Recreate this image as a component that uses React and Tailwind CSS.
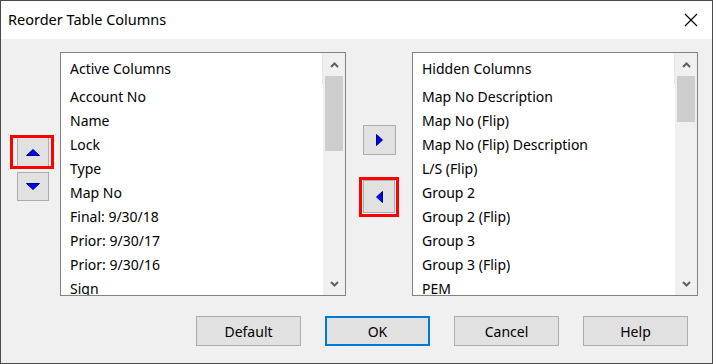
const font = { fontFamily: '"Noto Sans", "Open Sans", sans-serif' };

const activeColumns = [
  'Account No',
  'Name',
  'Lock',
  'Type',
  'Map No',
  'Final: 9/30/18',
  'Prior: 9/30/17',
  'Prior: 9/30/16',
  'Sign',
];

const hiddenColumns = [
  'Map No Description',
  'Map No (Flip)',
  'Map No (Flip) Description',
  'L/S (Flip)',
  'Group 2',
  'Group 2 (Flip)',
  'Group 3',
  'Group 3 (Flip)',
  'PEM',
];

const Chevron = ({ up }) => (
  <svg width="9" height="6" viewBox="0 0 9 6">
    <polyline
      points={up ? '1,5 4.5,1.5 8,5' : '1,1 4.5,4.5 8,1'}
      fill="none"
      stroke="#606060"
      strokeWidth="2"
    />
  </svg>
);

const Triangle = ({ dir }) => {
  const pts = {
    up: '0.5,6.5 7,0.5 13.5,6.5',
    down: '0.5,0.5 7,6.5 13.5,0.5',
    right: '0.5,0.5 6.5,6 0.5,11.5',
    left: '6.5,0.5 0.5,6 6.5,11.5',
  }[dir];
  const vertical = dir === 'up' || dir === 'down';
  return (
    <svg width={vertical ? 14 : 7} height={vertical ? 7 : 12} viewBox={vertical ? '0 0 14 7' : '0 0 7 12'}>
      <polygon points={pts} fill="#0000ff" stroke="#000080" strokeWidth="1" />
    </svg>
  );
};

const ArrowButton = ({ dir, className }) => (
  <div className={`flex items-center justify-center bg-[#e1e1e1] border border-[#adadad] ${className}`}>
    <Triangle dir={dir} />
  </div>
);

const ListBox = ({ title, items, thumbHeight }) => (
  <div className="w-[286px] h-[244px] border border-[#828282] bg-white overflow-hidden flex">
    <div className="flex-1 flex flex-col">
      <div className="h-[31px] flex items-center pl-[9px] border-r border-[#e5e5e5] shrink-0">
        {title}
      </div>
      {items.map((item) => (
        <div key={item} className="h-[24px] flex items-center pl-[9px] shrink-0 whitespace-nowrap">
          {item}
        </div>
      ))}
    </div>
    <div className="w-[22px] bg-[#f0f0f0] flex flex-col items-center shrink-0">
      <div className="h-[23px] flex items-center justify-center">
        <Chevron up />
      </div>
      <div className="flex-1 w-full px-[2px]">
        <div className="bg-[#cdcdcd] w-full" style={{ height: thumbHeight }} />
      </div>
      <div className="h-[23px] flex items-center justify-center">
        <Chevron />
      </div>
    </div>
  </div>
);

const DialogButton = ({ label, primary }) => (
  <div
    className={`w-[105px] h-[30px] flex items-center justify-center bg-[#e1e1e1] ${
      primary ? 'border-2 border-[#0078d7]' : 'border border-[#adadad]'
    }`}
  >
    {label}
  </div>
);

export default function App() {
  return (
    <div
      className="w-[713px] h-[364px] border border-[#4a4a4a] bg-[#f0f0f0] flex flex-col text-[14px] text-black overflow-hidden"
      style={font}
    >
      {/* Title bar */}
      <div className="h-[38px] bg-white flex items-center justify-between pl-[7px] pr-[14px] shrink-0">
        <span className="text-[14.5px]">Reorder Table Columns</span>
        <svg width="14" height="14" viewBox="0 0 14 14">
          <path d="M1 1 L13 13 M13 1 L1 13" stroke="#000" strokeWidth="1.1" />
        </svg>
      </div>

      {/* Body */}
      <div className="flex pt-[13px]">
        <div className="w-[59px] pl-[16px] flex flex-col">
          <div className="relative mt-[85px]">
            <ArrowButton dir="up" className="w-[32px] h-[30px]" />
            <div className="absolute left-[-7px] top-[-2px] w-[44px] h-[34px] border-[3px] border-[#ff0000]" />
          </div>
          <ArrowButton dir="down" className="w-[32px] h-[29px] mt-[5px]" />
        </div>

        <ListBox title="Active Columns" items={activeColumns} thumbHeight={75} />

        <div className="w-[66px] pl-[17px] flex flex-col">
          <ArrowButton dir="right" className="w-[33px] h-[30px] mt-[73px]" />
          <div className="relative mt-[25px]">
            <ArrowButton dir="left" className="w-[32px] h-[33px]" />
            <div className="absolute left-[-4px] top-[-3px] w-[40px] h-[40px] border-[3px] border-[#ff0000]" />
          </div>
        </div>

        <ListBox title="Hidden Columns" items={hiddenColumns} thumbHeight={46} />
      </div>

      {/* Footer buttons */}
      <div className="flex justify-end gap-[24px] pr-[24px] mt-[20px]">
        <DialogButton label="Default" />
        <DialogButton label="OK" primary />
        <DialogButton label="Cancel" />
        <DialogButton label="Help" />
      </div>
    </div>
  );
}
